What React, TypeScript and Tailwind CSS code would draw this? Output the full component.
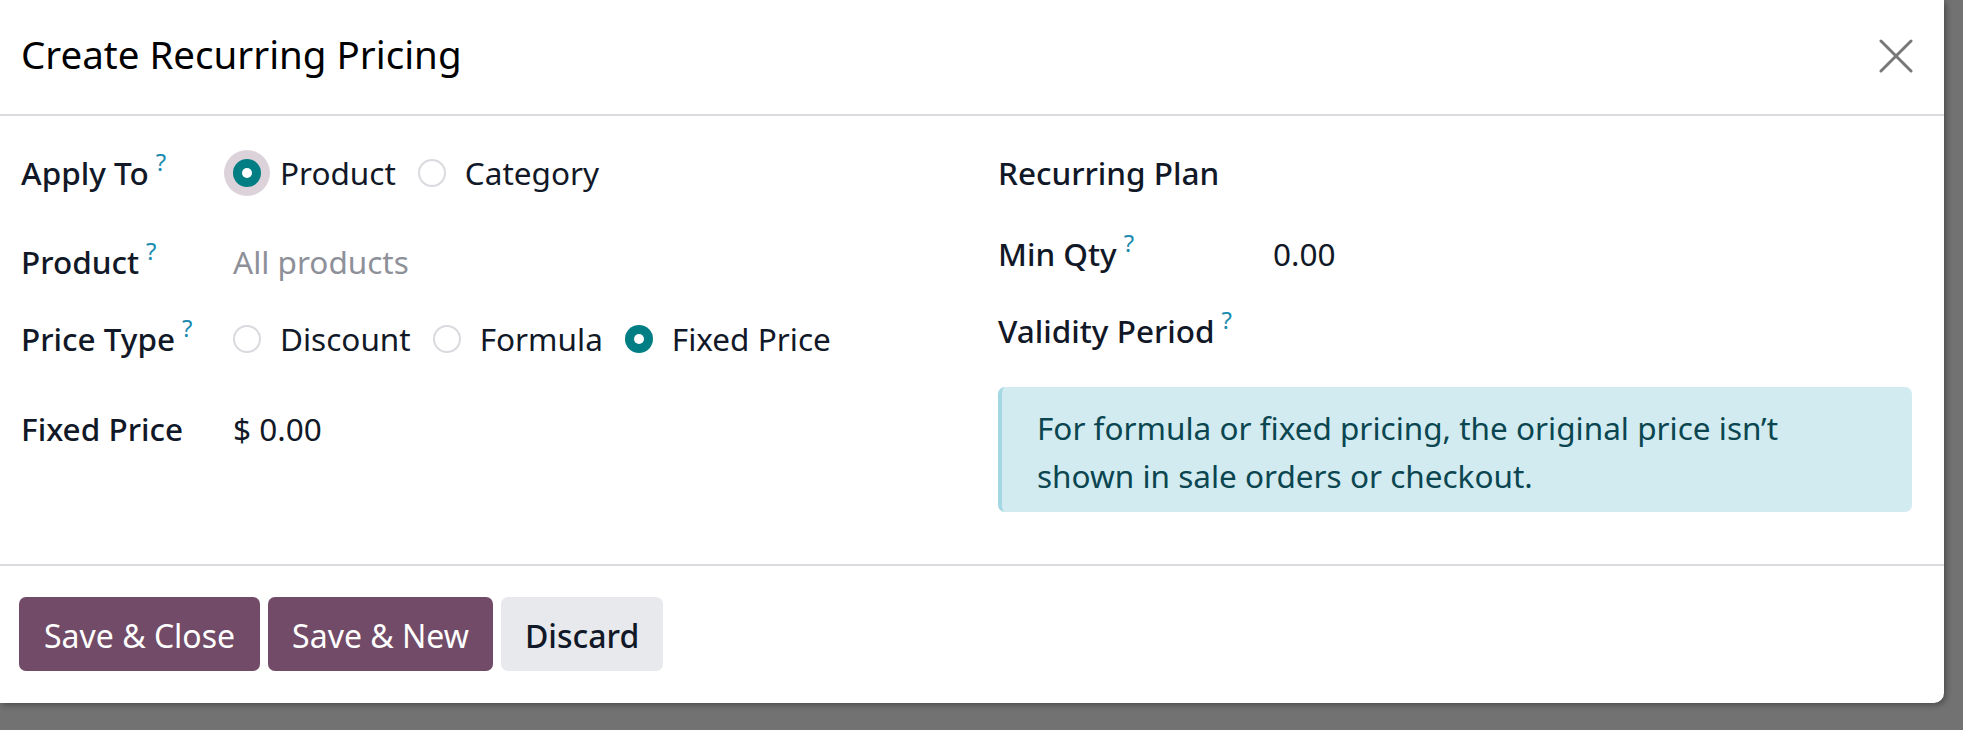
import React from "react";

function Help() {
  return (
    <sup className="text-[24px] text-[#1a8cb0] ml-[7px] top-[-14px] font-normal">?</sup>
  );
}

function Radio({ checked, focus }: { checked?: boolean; focus?: boolean }) {
  if (checked) {
    return (
      <span
        className={
          "w-[28px] h-[28px] rounded-full bg-[#017e84] flex items-center justify-center shrink-0 " +
          (focus ? "shadow-[0_0_0_9px_#dcd3da]" : "")
        }
      >
        <span className="block w-[10px] h-[10px] rounded-full bg-white" />
      </span>
    );
  }
  return <span className="block w-[28px] h-[28px] rounded-full bg-white border-2 border-[#d8dadd] shrink-0" />;
}

function Label({ children, help, w }: { children: React.ReactNode; help?: boolean; w: string }) {
  return (
    <div className={"shrink-0 flex items-center " + w}>
      <span className="font-medium text-[#111827]">
        {children}
        {help && <Help />}
      </span>
    </div>
  );
}

export default function App() {
  return (
    <div className="min-h-screen w-full bg-[#717271] font-['Noto_Sans',sans-serif] text-[31.5px] text-[#111827]">
      <div className="w-[1944px] h-[703px] bg-white rounded-br-[10px] shadow-[2px_2px_6px_rgba(0,0,0,0.35)] flex flex-col">
        <div className="h-[116px] border-b-2 border-[#d8dadd] flex items-center justify-between pl-[21px] pr-[31px]">
          <h1 className="text-[38.5px] text-black leading-none mt-[-6px]">Create Recurring Pricing</h1>
          <svg width="34" height="34" viewBox="0 0 34 34" className="block mt-[-2px]">
            <path d="M2 2 L32 32 M32 2 L2 32" stroke="#787878" strokeWidth="3" strokeLinecap="round" />
          </svg>
        </div>

        <div className="flex-1 flex pt-[33px] pl-[21px]">
          <div className="w-[977px] flex flex-col">
            <div className="h-[48px] flex items-center">
              <Label w="w-[212px]" help>Apply To</Label>
              <div className="flex items-center">
                <Radio checked focus />
                <span className="ml-[19px]">Product</span>
                <span className="ml-[22px] flex"><Radio /></span>
                <span className="ml-[19px]">Category</span>
              </div>
            </div>
            <div className="h-[48px] mt-[41px] flex items-center">
              <Label w="w-[212px]" help>Product</Label>
              <span className="text-[#8e9099]">All products</span>
            </div>
            <div className="h-[48px] mt-[29px] flex items-center">
              <Label w="w-[212px]" help>Price Type</Label>
              <div className="flex items-center">
                <Radio />
                <span className="ml-[19px]">Discount</span>
                <span className="ml-[22px] flex"><Radio /></span>
                <span className="ml-[19px]">Formula</span>
                <span className="ml-[22px] flex"><Radio checked /></span>
                <span className="ml-[19px]">Fixed Price</span>
              </div>
            </div>
            <div className="h-[48px] mt-[42px] flex items-center">
              <Label w="w-[212px]">Fixed Price</Label>
              <span>$ 0.00</span>
            </div>
          </div>

          <div className="w-[914px] flex flex-col">
            <div className="h-[48px] flex items-center">
              <Label w="w-[275px]">Recurring Plan</Label>
            </div>
            <div className="h-[48px] mt-[33px] flex items-center">
              <Label w="w-[275px]" help>Min Qty</Label>
              <span>0.00</span>
            </div>
            <div className="h-[48px] mt-[29px] flex items-center">
              <Label w="w-[275px]" help>Validity Period</Label>
            </div>
            <div className="mt-[32px] h-[125px] rounded-[7px] bg-[#d1ebf0] border-l-4 border-[#a3d8e3] pl-[35px] pr-[20px] pt-[17px] text-[#0b4650] leading-[48px]">
              For formula or fixed pricing, the original price isn’t
              <br />
              shown in sale orders or checkout.
            </div>
          </div>
        </div>

        <div className="h-[139px] border-t-2 border-[#d8dadd] flex items-start gap-[8px] pt-[31px] pl-[19px] text-[32px]">
          <button className="h-[74px] px-[25px] pt-[3px] rounded-[7px] bg-[#714b67] text-white">Save &amp; Close</button>
          <button className="h-[74px] px-[24px] pt-[3px] rounded-[7px] bg-[#714b67] text-white">Save &amp; New</button>
          <button className="h-[74px] px-[24px] pt-[3px] rounded-[7px] bg-[#e7e9ed] text-[#111827] font-medium">Discard</button>
        </div>
      </div>
    </div>
  );
}
